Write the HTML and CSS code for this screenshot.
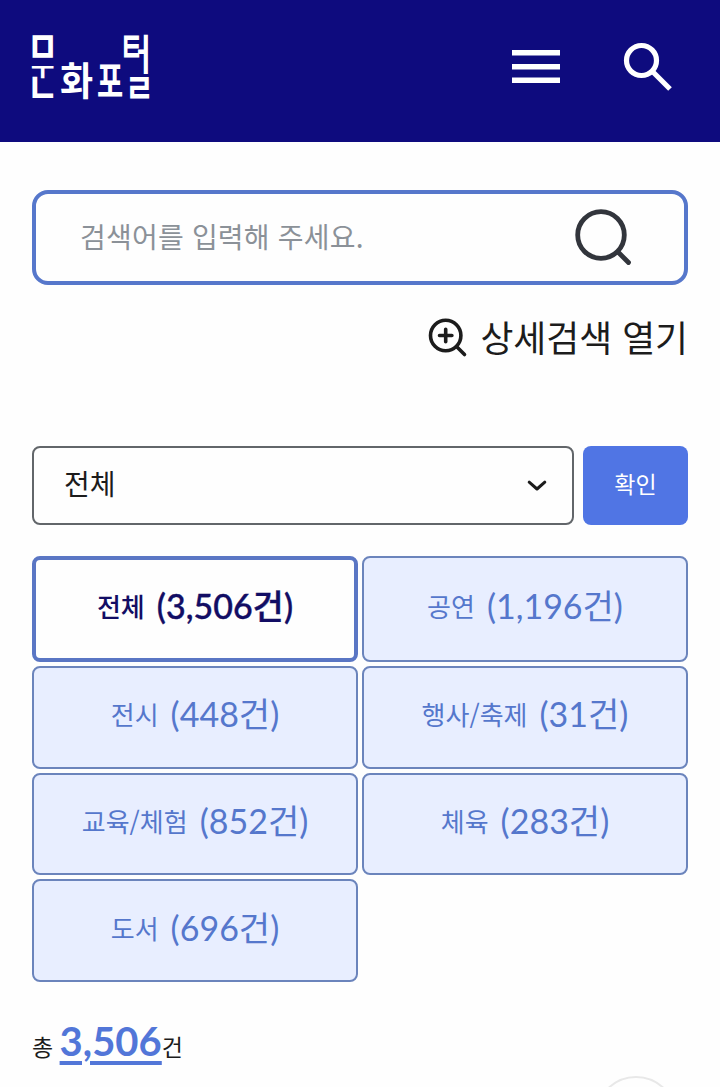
FILE: index.html
```html
<!DOCTYPE html>
<html lang="ko">
<head>
<meta charset="utf-8">
<meta name="viewport" content="width=device-width, initial-scale=1">
<title>문화포털</title>
<link rel="stylesheet" href="styles.css">
</head>
<body>
<header class="header">
  <a class="logo" aria-label="문화포털">
    <svg width="120" height="68" viewBox="0 0 120 68">
      <g class="logo-text">
        <text y="11.5" transform="translate(11.500 13.500) scale(1.15 1.500)">ㅁ</text>
        <text y="11.5" transform="translate(11.500 37) scale(.86 .8)">ㅜ</text>
        <text y="11.5" transform="translate(11.500 54.500) scale(1.15 1.450)">ㄴ</text>
        <text y="11.5" transform="translate(45.500 47.500) scale(1.2 1.300)">화</text>
        <text y="11.5" transform="translate(79 47.500) scale(.95 1.400)">포</text>
        <text y="11.5" transform="translate(100.500 13.500) scale(.85 1.450)">ㅌ</text>
        <text y="11.5" transform="translate(112 20.500) scale(1 1.400)">ㅓ</text>
        <text y="11.5" transform="translate(108.500 54.500) scale(1.05 1.400)">ㄹ</text>
      </g>
    </svg>
  </a>
  <div class="actions">
    <svg class="menu-icon" width="48" height="34" viewBox="0 0 48 34"><path d="M0 2.7h48M0 16.7h48M0 30.3h48"/></svg>
    <svg class="find-icon" width="50" height="50" viewBox="0 0 50 50"><circle cx="18.500" cy="17.500" r="15"/><path d="M28.500 27.500l18.500 18.5"/></svg>
  </div>
</header>
<main class="main">
  <div class="search">
    <span class="placeholder">검색어를 입력해 주세요.</span>
    <svg class="search-icon" width="58" height="58" viewBox="0 0 58 58"><circle cx="27" cy="26" r="23.3"/><path d="M44 43L54.500 53.500"/></svg>
  </div>
  <a class="advanced">
    <svg class="plus-icon" width="39" height="39" viewBox="0 0 39 39"><circle cx="17.7" cy="17.5" r="15.2"/><path d="M29 29l7.5 7.5M11.500 17.5h12.4M17.7 11.300v12.4"/></svg>
    <span>상세검색 열기</span>
  </a>
  <div class="filter">
    <div class="select">
      <span>전체</span>
      <svg class="chevron" width="20" height="12" viewBox="0 0 20 12"><path d="M2.2 2.2L10 9l7.800-6.800"/></svg>
    </div>
    <button class="confirm">확인</button>
  </div>
  <nav class="tabs">
    <a class="tab active"><span>전체</span><b>(3,506건)</b></a>
    <a class="tab"><span>공연</span><b>(1,196건)</b></a>
    <a class="tab"><span>전시</span><b>(448건)</b></a>
    <a class="tab"><span>행사/축제</span><b>(31건)</b></a>
    <a class="tab"><span>교육/체험</span><b>(852건)</b></a>
    <a class="tab"><span>체육</span><b>(283건)</b></a>
    <a class="tab"><span>도서</span><b>(696건)</b></a>
  </nav>
  <p class="total">총 <strong>3,506</strong>건</p>
</main>
<div class="corner"><div class="top-button"></div></div>
</body>
</html>
```
FILE: styles.css
```css
* { box-sizing: border-box; }
body {
  margin: 0;
  height: 1087px;
  overflow: hidden;
  position: relative;
  background: #fefefe;
  color: #1c1c1c;
  font-family: "Noto Sans CJK KR", sans-serif;
}
svg { display: block; fill: none; flex: none; overflow: visible; }
.header {
  height: 142px;
  padding: 33px 47px 0 31px;
  background: #0e0b7e;
  display: flex;
  justify-content: space-between;
  align-items: flex-start;
}
.logo-text { fill: #fff; font-size: 30px; font-weight: 700; text-anchor: middle; }
.actions { display: flex; gap: 63px; padding-top: 9px; }
.menu-icon { margin-top: 8px; stroke: #fff; stroke-width: 5.400; }
.find-icon { margin-top: 1px; stroke: #fff; stroke-width: 5.200; }
.main { padding: 48px 32px 0; }
.search {
  height: 95px;
  padding: 0 52px 0 44px;
  border: 4px solid #5677cb;
  border-radius: 16px;
  display: flex;
  align-items: center;
  justify-content: space-between;
}
.placeholder { padding-bottom: 4px; font-size: 28px; letter-spacing: .2px; color: #8b9198; line-height: 40px; }
.search-icon { stroke: #32353c; stroke-width: 4.800; stroke-linecap: round; }
.advanced {
  display: flex;
  justify-content: flex-end;
  align-items: center;
  gap: 13px;
  height: 52px;
  margin-top: 26px;
  font-size: 35.800px;
  line-height: 50px;
}
.advanced span { padding-bottom: 2px; }
.plus-icon { stroke: #1c1c1c; stroke-width: 3.600; stroke-linecap: round; }
.filter { display: flex; gap: 9px; height: 79px; margin-top: 83px; }
.select {
  flex: 1;
  display: flex;
  align-items: center;
  justify-content: space-between;
  padding: 0 25px 0 30px;
  border: 2px solid #62666a;
  border-radius: 8px;
  font-size: 28px;
}
.select span { padding-bottom: 5px; }
.chevron { stroke: #1c1c1c; stroke-width: 3; stroke-linecap: round; stroke-linejoin: round; }
.confirm {
  width: 105px;
  padding-bottom: 6px;
  border: 0;
  border-radius: 8px;
  background: #5075e4;
  color: #fff;
  font: 23px "Noto Sans CJK KR", sans-serif;
}
.tabs {
  display: grid;
  grid-template-columns: 1fr 1fr;
  grid-template-rows: 106px repeat(3, 102.700px);
  gap: 4px;
  margin-top: 31px;
}
.tab {
  display: flex;
  align-items: center;
  justify-content: center;
  gap: 12px;
  padding-bottom: 6px;
  border: 2px solid #6b84bc;
  border-radius: 8px;
  background: #e8eeff;
  color: #5577cc;
  font-size: 26px;
  line-height: 40px;
}
.tab b { font-family: Lato, "Noto Sans CJK KR", sans-serif; font-size: 34px; font-weight: 400; }
.tab.active { border: 4px solid #5a76c4; background: #fefefe; color: #120d64; font-weight: 500; }
.tab.active b { font-weight: 500; -webkit-text-stroke: .4px #120d64; }
.total { margin: 28px 0 0; font-size: 23px; line-height: 62px; }
.total strong {
  color: #5276d8;
  font-family: Lato, "Noto Sans CJK KR", sans-serif;
  font-size: 40px;
  font-weight: 700;
  text-decoration: underline;
  text-decoration-thickness: 4px;
  text-underline-offset: 5px;
}
.corner {
  position: absolute;
  left: 595px;
  bottom: 0;
  width: 82px;
  height: 11px;
  overflow: hidden;
}
.top-button {
  width: 82px;
  height: 82px;
  border: 2px solid #e8e8e8;
  border-radius: 50%;
}
```
